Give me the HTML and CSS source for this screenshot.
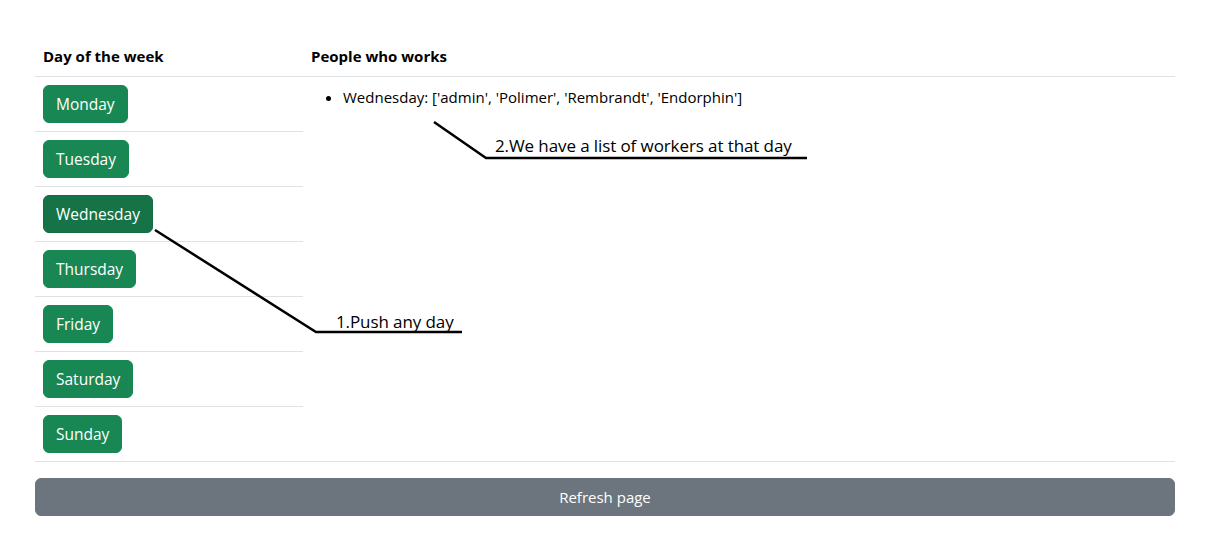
FILE: index.html
```html
<!DOCTYPE html>
<html lang="en">
<head>
<meta charset="utf-8">
<title>Schedule</title>
<link rel="stylesheet" href="styles.css">
</head>
<body>
<div class="container">
  <table class="table">
    <thead>
      <tr>
        <th class="col-day">Day of the week</th>
        <th>People who works</th>
      </tr>
    </thead>
    <tbody>
      <tr>
        <td class="col-day"><button class="btn btn-success">Monday</button></td>
        <td class="people" rowspan="7">
          <ul>
            <li>Wednesday: ['admin', 'Polimer', 'Rembrandt', 'Endorphin']</li>
          </ul>
        </td>
      </tr>
      <tr><td class="col-day"><button class="btn btn-success">Tuesday</button></td></tr>
      <tr><td class="col-day"><button class="btn btn-success active">Wednesday</button></td></tr>
      <tr><td class="col-day"><button class="btn btn-success">Thursday</button></td></tr>
      <tr><td class="col-day"><button class="btn btn-success">Friday</button></td></tr>
      <tr><td class="col-day"><button class="btn btn-success">Saturday</button></td></tr>
      <tr><td class="col-day"><button class="btn btn-success">Sunday</button></td></tr>
    </tbody>
  </table>
  <button class="btn btn-secondary btn-block">Refresh page</button>
</div>
<svg class="annotations" width="1207" height="547" viewBox="0 0 1207 547">
  <polyline points="155,230 316,332 462,332" fill="none" stroke="#000" stroke-width="2.5"/>
  <polyline points="434,122 486,158 807,158" fill="none" stroke="#000" stroke-width="2.5"/>
</svg>
<div class="note note-1">1.Push any day</div>
<div class="note note-2">2.We have a list of workers at that day</div>
</body>
</html>
```

FILE: styles.css
```css
* { box-sizing: border-box; }
body {
  margin: 0;
  font-family: "Open Sans", "Noto Sans", sans-serif;
  font-size: 15px;
  line-height: 24px;
  color: #212529;
  background: #fff;
}
.container {
  width: 1140px;
  margin-left: 35px;
  padding-top: 36px;
}
.table {
  width: 100%;
  border-collapse: collapse;
  margin-bottom: 16px;
}
.table th, .table td {
  padding: 8px;
  text-align: left;
  vertical-align: top;
  border-bottom: 1px solid #dee2e6;
}
.table th { font-weight: 700; color: #000; }
.col-day { width: 268px; }
.btn {
  display: inline-block;
  font-family: inherit;
  font-size: 15.5px;
  line-height: 24px;
  padding: 6px 12px;
  border: 1px solid transparent;
  border-radius: 6px;
  color: #fff;
  cursor: pointer;
}
.btn-success { background: #198754; border-color: #198754; }
.btn-success.active { background: #157347; border-color: #146c43; }
.btn-secondary { background: #6c757d; border-color: #6c757d; font-size: 15px; }
.btn-block { display: block; width: 100%; }
.people ul { margin: 0 0 16px; padding-left: 32px; color: #000; }
.annotations { position: absolute; left: 0; top: 0; pointer-events: none; }
.note { position: absolute; font-size: 17px; line-height: 20px; color: #000; letter-spacing: -0.1px; }
.note-1 { left: 336px; top: 312px; }
.note-2 { left: 495px; top: 136px; }
```
